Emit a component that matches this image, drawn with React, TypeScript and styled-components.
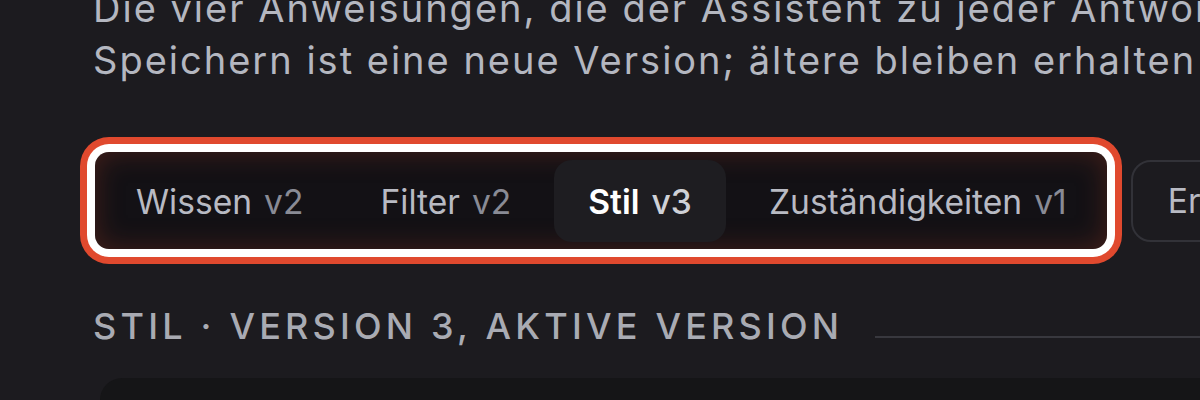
import styled, { createGlobalStyle } from "styled-components";

const GlobalStyle = createGlobalStyle`
  html, body {
    margin: 0;
    padding: 0;
    background: #1c1b1f;
    overflow: hidden;
  }
  body {
    font-family: Inter, "Noto Sans", sans-serif;
    -webkit-font-smoothing: antialiased;
  }
`;

const Page = styled.div`
  width: 1500px;
  padding: 0 0 0 93px;
  margin-top: -18px;
`;

const Intro = styled.p`
  margin: 0;
  font-size: 38px;
  line-height: 52px;
  letter-spacing: 2px;
  color: #b4b7c0;
  white-space: nowrap;
`;

const Toolbar = styled.div`
  display: flex;
  align-items: center;
  gap: 24px;
  margin-top: 66px;
  padding-left: 2px;
`;

const TabBar = styled.div`
  display: flex;
  align-items: center;
  gap: 9px;
  padding: 8px 6px 7px 7px;
  border-radius: 14px;
  background: #131115;
  box-shadow:
    inset 0 0 28px rgba(150, 55, 35, 0.38),
    0 0 0 8px #ffffff,
    0 0 0 15px #e0492e;
`;

const Tab = styled.button<{ $active?: boolean }>`
  display: flex;
  align-items: center;
  gap: 12px;
  height: 82px;
  padding: 0 34px;
  border: none;
  border-radius: 18px;
  font-family: inherit;
  font-size: 33.6px;
  font-weight: ${(p) => (p.$active ? 600 : 400)};
  color: ${(p) => (p.$active ? "#ffffff" : "#b8bac3")};
  background: ${(p) => (p.$active ? "#1e1d21" : "transparent")};
  cursor: pointer;

  > span {
    font-weight: ${(p) => (p.$active ? 500 : 400)};
    color: ${(p) => (p.$active ? "#cfd1d7" : "#898b95")};
  }
`;

const GhostButton = styled.button`
  height: 82px;
  padding: 0 35px;
  border: 2px solid #323238;
  border-radius: 20px;
  background: transparent;
  font-family: inherit;
  font-size: 33.6px;
  color: #b8bac3;
  white-space: nowrap;
`;

const SectionHead = styled.div`
  display: flex;
  align-items: center;
  gap: 32px;
  margin-top: 55px;

  > h3 {
    margin: 0;
    font-size: 36px;
    font-weight: 500;
    letter-spacing: 4.2px;
    text-transform: uppercase;
    color: #a9abb3;
    white-space: nowrap;
  }

  > hr {
    flex: 1;
    margin: 22px 0 0;
    border: none;
    height: 2px;
    background: #38383e;
  }
`;

const Card = styled.div`
  margin-top: 30px;
  margin-left: 7px;
  height: 200px;
  border-radius: 22px;
  background: #151517;
`;

const tabs = [
  { name: "Wissen", version: "v2" },
  { name: "Filter", version: "v2" },
  { name: "Stil", version: "v3", active: true },
  { name: "Zuständigkeiten", version: "v1" },
];

export default function App() {
  return (
    <>
      <GlobalStyle />
      <Page>
        <Intro>
          Die vier Anweisungen, die der Assistent zu jeder Antwort bekommt.
          <br />
          Speichern ist eine neue Version; ältere bleiben erhalten und lassen
          sich wiederherstellen.
        </Intro>
        <Toolbar>
          <TabBar>
            {tabs.map((t) => (
              <Tab key={t.name} $active={t.active}>
                {t.name} <span>{t.version}</span>
              </Tab>
            ))}
          </TabBar>
          <GhostButton>Erstellen</GhostButton>
        </Toolbar>
        <SectionHead>
          <h3>Stil · Version 3, aktive Version</h3>
          <hr />
        </SectionHead>
        <Card />
      </Page>
    </>
  );
}
